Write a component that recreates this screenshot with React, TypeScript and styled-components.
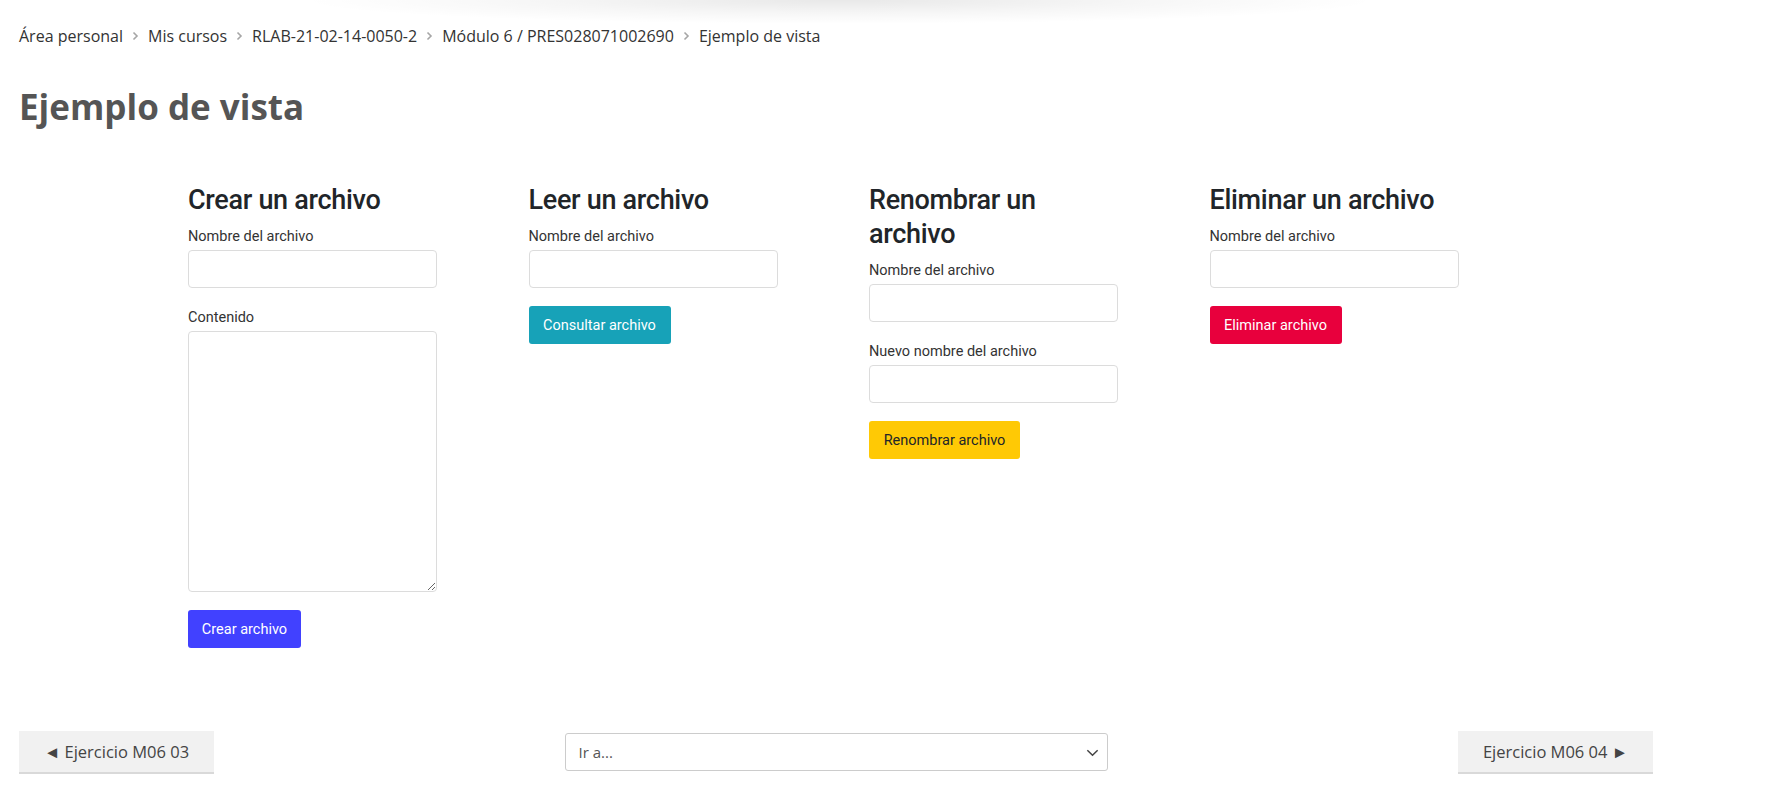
import React from "react";
import styled, { createGlobalStyle } from "styled-components";

const GlobalStyle = createGlobalStyle`
  * {
    box-sizing: border-box;
  }
  body {
    margin: 0;
    background: #ffffff;
    font-family: "Open Sans", "Liberation Sans", sans-serif;
    color: #333333;
  }
`;

const Page = styled.div`
  position: relative;
  min-height: 789px;
  padding: 25px 121px 0 19px;
`;

/* shadow of the header bar that sits just above the viewport */
const HeaderShadow = styled.div`
  position: absolute;
  top: 0;
  left: 300px;
  width: 1080px;
  height: 24px;
  background: radial-gradient(
    ellipse 50% 100% at 50% 0%,
    rgba(0, 0, 0, 0.09) 0%,
    rgba(0, 0, 0, 0.035) 55%,
    rgba(0, 0, 0, 0) 100%
  );
  pointer-events: none;
`;

const Breadcrumb = styled.nav`
  display: flex;
  align-items: center;
  height: 22px;
  font-size: 16px;
  color: #333333;

  a {
    color: #333333;
    text-decoration: none;
  }
`;

const Sep = styled.span`
  display: inline-flex;
  align-items: center;
  margin: 0 9px;
  color: #a6a6a6;
`;

const Title = styled.h1`
  margin: 39px 0 0;
  font-size: 35px;
  line-height: 42px;
  font-weight: 700;
  color: #555555;
`;

const Forms = styled.div`
  display: grid;
  grid-template-columns: repeat(4, 340.5px);
  margin-top: 55px;
  padding-left: 169px;
  font-family: Roboto, "Liberation Sans", sans-serif;
`;

const Column = styled.section`
  width: 249px;
`;

const FormTitle = styled.h3`
  margin: 0 0 9px;
  font-size: 27px;
  line-height: 34px;
  font-weight: 500;
  color: #212529;
  letter-spacing: -0.3px;
`;

const Group = styled.div`
  margin-bottom: 19px;
`;

const Label = styled.label`
  display: block;
  font-size: 14.5px;
  line-height: 21px;
  color: #333333;
  margin-bottom: 3px;
`;

const Input = styled.input`
  display: block;
  width: 100%;
  height: 38px;
  border: 1px solid #dcdcdc;
  border-radius: 4px;
  padding: 0 10px;
  font-family: inherit;
  font-size: 15px;
`;

const TextArea = styled.textarea`
  display: block;
  width: 100%;
  height: 261px;
  border: 1px solid #dcdcdc;
  border-radius: 4px;
  padding: 6px 10px;
  font-family: inherit;
  font-size: 15px;
`;

const ActionButton = styled.button<{ $bg: string; $fg?: string; $w: number }>`
  display: block;
  width: ${(p) => p.$w}px;
  height: 38px;
  margin-top: -1px;
  border: none;
  border-radius: 3px;
  background: ${(p) => p.$bg};
  color: ${(p) => p.$fg || "#ffffff"};
  font-family: inherit;
  font-size: 14.5px;
  cursor: pointer;
`;

const BottomNav = styled.div`
  display: flex;
  align-items: center;
  justify-content: space-between;
  margin-top: 83px;
`;

const NavButton = styled.a`
  display: flex;
  align-items: center;
  justify-content: center;
  gap: 6px;
  width: 195px;
  height: 41px;
  background: #f1f1f1;
  box-shadow: 0 2px 0 #d9d9d9;
  font-size: 16.5px;
  color: #444444;
  text-decoration: none;
`;

const Jump = styled.div`
  position: relative;
  width: 543px;
  height: 38px;
  border: 1px solid #cccccc;
  border-radius: 3px;
  display: flex;
  align-items: center;
  padding: 0 13px;
  font-size: 15px;
  color: #555555;
`;

const JumpArrow = styled.span`
  position: absolute;
  right: 7px;
  top: 11px;
  display: flex;
`;

const Chevron = () => (
  <svg width="7" height="10" viewBox="0 0 7 10">
    <path d="M1.5 1.5 L5 5 L1.5 8.5" fill="none" stroke="currentColor" strokeWidth="1.6" />
  </svg>
);

const crumbs = [
  "Área personal",
  "Mis cursos",
  "RLAB-21-02-14-0050-2",
  "Módulo 6 / PRES028071002690",
  "Ejemplo de vista",
];

const App = () => {
  return (
    <>
      <GlobalStyle />
      <Page>
        <HeaderShadow />
        <Breadcrumb>
          {crumbs.map((c, i) => (
            <React.Fragment key={c}>
              {i > 0 && (
                <Sep>
                  <Chevron />
                </Sep>
              )}
              <a href="#">{c}</a>
            </React.Fragment>
          ))}
        </Breadcrumb>

        <Title>Ejemplo de vista</Title>

        <Forms>
          <Column>
            <FormTitle>Crear un archivo</FormTitle>
            <Group>
              <Label>Nombre del archivo</Label>
              <Input type="text" />
            </Group>
            <Group>
              <Label>Contenido</Label>
              <TextArea />
            </Group>
            <ActionButton $bg="#4141ff" $w={113}>
              Crear archivo
            </ActionButton>
          </Column>

          <Column>
            <FormTitle>Leer un archivo</FormTitle>
            <Group>
              <Label>Nombre del archivo</Label>
              <Input type="text" />
            </Group>
            <ActionButton $bg="#17a2b8" $w={142}>
              Consultar archivo
            </ActionButton>
          </Column>

          <Column>
            <FormTitle>Renombrar un archivo</FormTitle>
            <Group>
              <Label>Nombre del archivo</Label>
              <Input type="text" />
            </Group>
            <Group>
              <Label>Nuevo nombre del archivo</Label>
              <Input type="text" />
            </Group>
            <ActionButton $bg="#ffc905" $fg="#212529" $w={151}>
              Renombrar archivo
            </ActionButton>
          </Column>

          <Column>
            <FormTitle>Eliminar un archivo</FormTitle>
            <Group>
              <Label>Nombre del archivo</Label>
              <Input type="text" />
            </Group>
            <ActionButton $bg="#e8003d" $w={132}>
              Eliminar archivo
            </ActionButton>
          </Column>
        </Forms>

        <BottomNav>
          <NavButton href="#">◄ Ejercicio M06 03</NavButton>
          <Jump>
            Ir a...
            <JumpArrow>
              <svg width="15" height="15" viewBox="0 0 16 16">
                <path d="M2.5 5.5 L8 11 L13.5 5.5" fill="none" stroke="#444" strokeWidth="1.6" />
              </svg>
            </JumpArrow>
          </Jump>
          <NavButton href="#">Ejercicio M06 04 ►</NavButton>
        </BottomNav>
      </Page>
    </>
  );
};

export default App;
